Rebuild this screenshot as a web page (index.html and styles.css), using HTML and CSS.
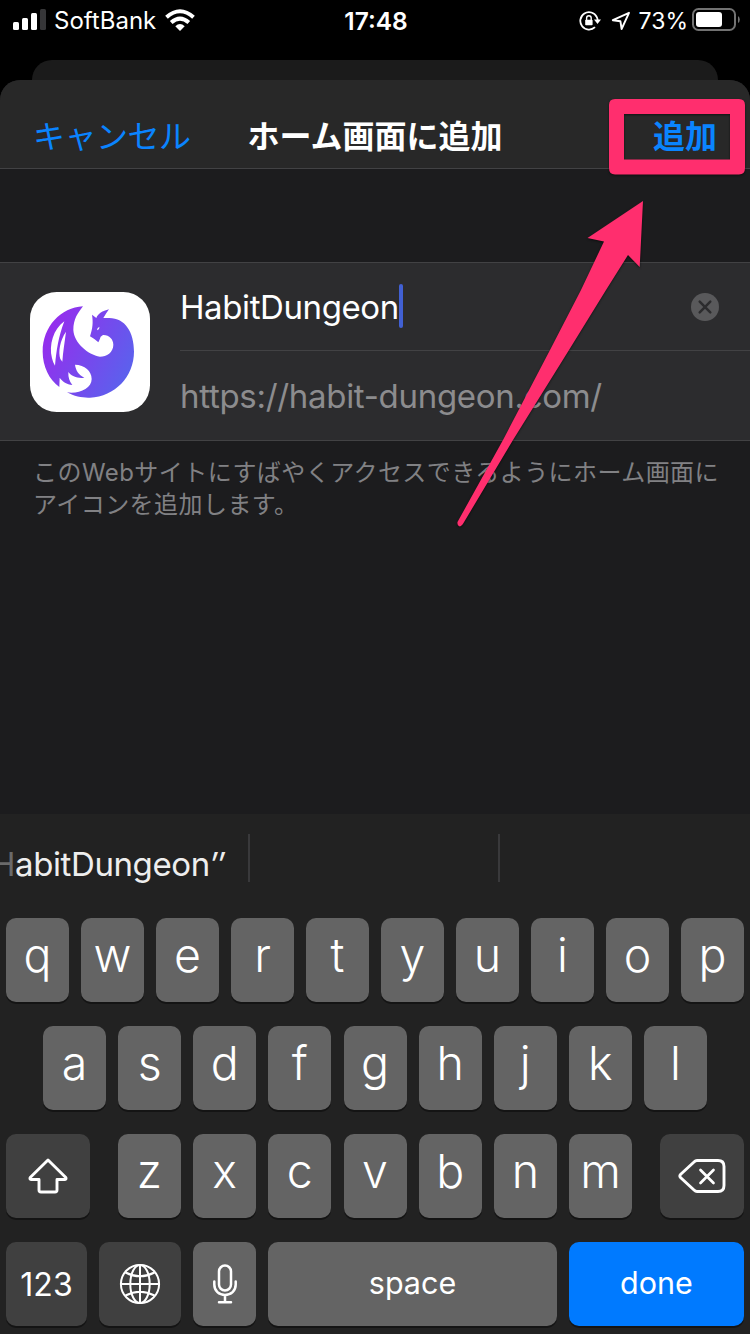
FILE: index.html
```html
<!DOCTYPE html>
<html lang="ja">
<head>
<meta charset="utf-8">
<title>ホーム画面に追加</title>
<link rel="stylesheet" href="styles.css">
</head>
<body>
<div class="screen">
  <div class="status">
    <div class="status-left">
      <svg class="signal" width="33" height="21" viewBox="0 0 33 21"><g fill="#fff"><rect y="13" width="6" height="8" rx="1.5"/><rect x="9" y="9" width="6" height="12" rx="1.5"/><rect x="18" y="4" width="6" height="17" rx="1.5"/></g><rect x="27" width="6" height="21" rx="1.5" fill="#363638"/></svg>
      <span class="carrier">SoftBank</span>
      <svg class="wifi" width="30" height="22" viewBox="0 0 30 22"><g fill="none" stroke="#fff" stroke-width="4"><path d="M1.5 8.2Q15-3.7 28.5 8.2"/><path d="M6.2 13.5Q15 5.6 23.8 13.5"/></g><path fill="#fff" d="M10.3 17.2Q15 13 19.7 17.2L15 22Z"/></svg>
    </div>
    <span class="clock">17:48</span>
    <div class="status-right">
      <svg class="lock" width="22" height="20" viewBox="0 0 22 20"><path d="M17.8 6A8.7 8.7 0 1 0 16 16.2M17.8 6Q18.7 8 18.7 10" fill="none" stroke="#fff" stroke-width="1.8"/><path d="M15 8.5h7L18.5 13Z" fill="#fff"/><rect x="6.2" y="8.7" width="7.4" height="5.6" rx=".8" fill="#fff"/><path d="M7.6 9V7.1a2.3 2.3 0 0 1 4.6 0V9" fill="none" stroke="#fff" stroke-width="1.4"/></svg>
      <svg class="location" width="20" height="20" viewBox="0 0 20 20"><path d="M18 1.8 1.8 9.2 9.4 10.2 10.6 18Z" fill="none" stroke="#fff" stroke-width="1.9" stroke-linejoin="round"/></svg>
      <span class="percent">73%</span>
      <svg class="battery" width="48" height="23" viewBox="0 0 48 23"><rect x="1" y="1" width="42" height="21" rx="5.5" fill="none" stroke="#727272" stroke-width="2"/><rect x="4" y="4" width="26" height="15" rx="3" fill="#fff"/><path d="M46 8q1.8 1 1.8 3.500T46 15Z" fill="#727272"/></svg>
    </div>
  </div>
  <div class="back-sheet"></div>
  <main class="sheet">
    <header class="nav">
      <span class="cancel">キャンセル</span>
      <h1 class="title">ホーム画面に追加</h1>
      <span class="add">追加</span>
    </header>
    <section class="form">
      <svg class="app-icon" width="120" height="120" viewBox="30 36 360 360">
        <defs><linearGradient id="dragon" x1="70" y1="140" x2="335" y2="270" gradientUnits="userSpaceOnUse"><stop stop-color="#982bed"/><stop offset="1" stop-color="#5b61ed"/></linearGradient></defs>
        <rect x="30" y="36" width="360" height="360" rx="80" fill="#fff"/>
        <path fill="url(#dragon)" d="M189 79C123 82 68 140 68 215C68 260 88 299 118 321L119 293C128 306 140 312 157 315Q144 300 145 276C154 289 174 296 193 293C175 284 167 270 165 254C194 255 215 272 215 297C215 326 177 342 141 337C164 350 190 354 210 353C285 350 342 289 342 215C342 156 315 112 264 114L250 114Q258 100 267 88C247 93 234 101 229 114L216 104C220 128 218 145 210 169L223 177 235 187Q239 179 242 170L249 165C267 164 280 178 280 194C280 217 260 230 240 230C203 224 162 188 160 150C160 116 174 99 189 79Z"/>
        <g fill="#fff"><path d="M133 124C100 147 86 195 96 235Q99 249 105 257C109 213 115 171 133 124Z"/><path d="M138 155C120 181 114 215 121 237L127 245C129 215 134 187 138 155Z"/><path d="M231 151Q231 143 238 140Q239 148 231 151Z"/></g>
      </svg>
      <div class="fields">
        <div class="name-row"><span class="name">HabitDungeon</span><i class="caret"></i>
          <svg class="clear" width="28" height="28" viewBox="0 0 28 28"><circle cx="14" cy="14" r="14" fill="#59595b"/><path d="m8.700 8.700 10.600 10.600m0-10.600L8.700 19.300" stroke="#2c2c2e" stroke-width="2.500" stroke-linecap="round"/></svg>
        </div>
        <div class="url-row"><span class="url">https://habit-dungeon.com/</span></div>
      </div>
    </section>
    <p class="hint">このWebサイトにすばやくアクセスできるようにホーム画面に<br>アイコンを追加します。</p>
  </main>
  <div class="keyboard">
    <div class="suggestions">
      <div class="suggestion"><span class="suggestion-text"><span class="faded">H</span>abitDungeon<span class="quote">″</span></span></div>
      <div class="suggestion"></div>
      <div class="suggestion last"></div>
    </div>
    <div class="row"><b>q</b><b>w</b><b>e</b><b>r</b><b>t</b><b>y</b><b>u</b><b>i</b><b>o</b><b>p</b></div>
    <div class="row second"><b>a</b><b>s</b><b>d</b><b>f</b><b>g</b><b>h</b><b>j</b><b>k</b><b>l</b></div>
    <div class="row third">
      <b class="dark"><svg width="40" height="36" viewBox="0 0 40 36"><path d="M20 2 2.200 19.500Q1.500 21.500 3 21.500H11V32Q11 34 13 34H27Q29 34 29 32V21.500H37Q38.500 21.500 37.800 19.500Z" fill="none" stroke="#fff" stroke-width="2.900" stroke-linejoin="round"/></svg></b>
      <div class="letters"><b>z</b><b>x</b><b>c</b><b>v</b><b>b</b><b>n</b><b>m</b></div>
      <b class="dark"><svg width="48" height="36" viewBox="0 0 48 36"><path d="M19 2.500H40Q46 2.500 46 8.500V27.500Q46 33.500 40 33.500H19Q17.500 33.500 16 32L2.500 19.500Q1.200 18 2.500 16.500L16 4Q17.500 2.500 19 2.500Z" fill="none" stroke="#fff" stroke-width="2.900"/><path d="m22.500 12 13 13m0-13-13 13" stroke="#fff" stroke-width="2.700" stroke-linecap="round"/></svg></b>
    </div>
    <div class="row bottom">
      <b class="dark word digits">123</b>
      <b class="dark"><svg width="42" height="42" viewBox="0 0 42 42"><g fill="none" stroke="#fff" stroke-width="2"><circle cx="21" cy="21" r="19.100"/><ellipse cx="21" cy="21" rx="9.700" ry="19.100"/><path d="M21 2V40M2 21H40M6.500 9.500Q21 17 35.500 9.500M6.500 32.500Q21 25 35.500 32.500"/></g></svg></b>
      <b><svg width="26" height="40" viewBox="0 0 26 40"><g fill="none" stroke="#fff" stroke-width="2.500" stroke-linecap="round"><rect x="7" y="1.500" width="12" height="25" rx="6"/><path d="M2.300 17.500V20.500C2.300 27 7 31 13 31S23.700 27 23.700 20.500V17.500M13 31V38M7 38.200H19"/></g></svg></b>
      <b class="word">space</b>
      <b class="word done">done</b>
    </div>
  </div>
  <svg class="annotation" width="750" height="540" viewBox="0 0 750 540"><g fill="#ff2e6e"><path fill-rule="evenodd" d="M615 99H739Q745 99 745 105V168Q745 174.500 739 174.500H615Q609 174.500 609 168V105Q609 99 615 99ZM624 114V159.500H730V114Z"/><path d="M643 201 587.500 238 604 241.500 581 290 550 350 503 440 457.500 522Q457 526 460 526.500Q462 526 463.500 523L513 440 569 350 606 290 628 255 639.700 267Z"/></g></svg>
</div>
</body>
</html>
```
FILE: styles.css
```css
* { box-sizing: border-box; }
body { margin: 0; background: #000; font-family: Inter, "Noto Sans CJK JP", sans-serif; color: #fff; }
svg { display: block; flex: none; }
.screen { position: relative; width: 750px; height: 1334px; display: flex; flex-direction: column; overflow: hidden; }
.status { height: 60px; display: grid; grid-template-columns: 1fr auto 1fr; align-items: start; padding: 0 11px 0 13px; font-size: 24px; line-height: 42px; }
.status-left, .status-right { display: flex; }
.status-right { justify-content: flex-end; }
.signal { margin-top: 9px; }
.carrier { margin-left: 8px; }
.wifi { margin: 9px 0 0 9px; }
.clock { font-weight: 600; font-size: 24.500px; }
.lock { margin-top: 11px; }
.location { margin: 11px 8px 0 10px; }
.percent { font-size: 23px; }
.battery { margin: 8px 0 0 4px; }
.status-right { margin-right: -1px; }
.back-sheet { height: 20px; margin: 0 32px; border-radius: 20px 20px 0 0; background: #1b1b1b; flex: none; }
.sheet { height: 734px; background: #1c1c1e; border-radius: 20px 20px 0 0; flex: none; overflow: hidden; }
.nav { height: 89px; padding: 25px 33px 0; display: grid; grid-template-columns: 1fr auto 1fr; background: #282828; border-bottom: 1px solid #424244; line-height: 64px; font-size: 32px; }
.cancel { color: #0a84ff; letter-spacing: -.5px; }
.title { margin: 0; font-size: 32px; font-weight: 700; }
.add { color: #0a84ff; font-weight: 700; text-align: right; }
.form { height: 179px; margin-top: 93px; padding-left: 30px; display: flex; align-items: center; background: #2c2c2e; border: solid #424244; border-width: 1px 0; }
.fields { flex: 1; margin-left: 30px; }
.name-row { height: 88px; display: flex; align-items: center; border-bottom: 1px solid #424244; padding-right: 31px; }
.name, .url { font-size: 33px; line-height: 88px; letter-spacing: -.3px; }
.name { letter-spacing: -.4px; }
.caret { width: 4px; height: 44px; margin-bottom: 2px; border-radius: 2px; background: #4160d3; }
.clear { margin-left: auto; }
.url-row { height: 89px; padding-top: 1px; color: #8c8c8e; }
.hint { margin: 16px 33px 0; font-size: 24px; line-height: 32px; letter-spacing: .45px; color: #818184; white-space: nowrap; }
.keyboard { height: 520px; background: #222; padding: 20px 6px 0; flex: none; }
.suggestions { height: 84px; margin: 0 -6px; display: flex; }
.suggestion { width: 250px; height: 48px; border-right: 2px solid #39393b; display: flex; justify-content: flex-end; padding-right: 24px; }
.suggestion.last { border: 0; }
.suggestion-text { font-size: 33px; line-height: 60px; letter-spacing: -.4px; white-space: nowrap; color: #eee; }
.faded { color: #6a6a6a; }
.quote { font-style: italic; }
.row { display: flex; justify-content: space-between; height: 84px; margin-bottom: 24px; }
.row b { width: 63px; height: 84px; border-radius: 10px; background: #646464; box-shadow: 0 2px 0 #141414; display: flex; align-items: center; justify-content: center; font-size: 46.500px; font-weight: 350; padding-bottom: 10px; }
.row b:has(svg) { padding: 0; }
.second { padding: 0 37px; }
.letters { display: flex; gap: 12.200px; }
.row .dark { width: 84px; background: #404040; }
.row .word { font-size: 30.500px; font-weight: 400; padding-bottom: 3px; }
.row .digits { font-size: 32px; padding: 0; }
.bottom { display: grid; grid-template-columns: 81px 82px 63px 289px 175px; gap: 12px; justify-content: start; }
.bottom b, .bottom .dark { width: auto; }
.row .done { background: #007aff; }
.annotation { position: absolute; left: 0; top: 0; filter: drop-shadow(0 1px 1px #0008); }
```
